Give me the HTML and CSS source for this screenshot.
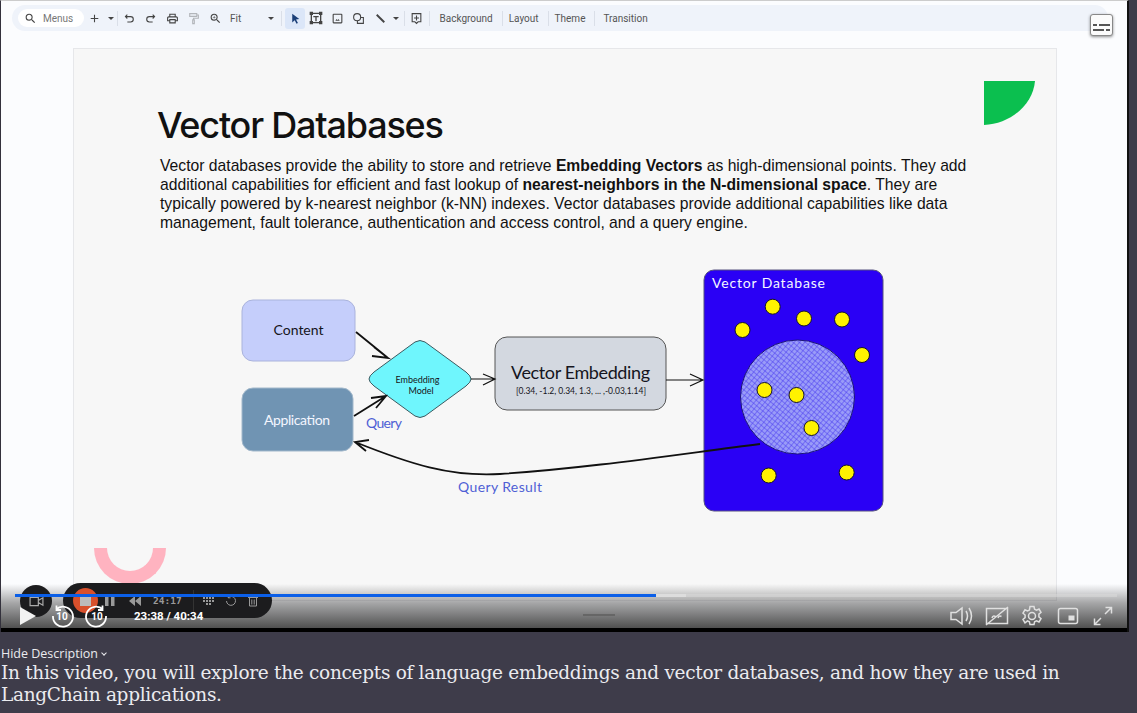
FILE: index.html
```html
<!DOCTYPE html>
<html>
<head>
    <title>Language embeddings and vector databases</title>
    <link rel="stylesheet" href="styles.css">
</head>
<body>
    <div class="video">
        <div class="toolbar">
            <div class="search">
                <svg class="icon" viewBox="0 0 24 24"><path d="M15.5 14h-.79l-.28-.27A6.47 6.47 0 0 0 16 9.5 6.5 6.5 0 1 0 9.5 16c1.61 0 3.09-.59 4.23-1.57l.27.28v.79l5 4.99L20.49 19l-4.99-5zm-6 0C7.01 14 5 11.99 5 9.5S7.01 5 9.5 5 14 7.01 14 9.5 11.99 14 9.5 14z"/></svg>
                <span>Menus</span>
            </div>
            <div class="tool"><svg class="icon" viewBox="0 0 24 24"><path d="M19 13h-6v6h-2v-6H5v-2h6V5h2v6h6v2z"/></svg></div>
            <div class="caret"></div>
            <div class="sep"></div>
            <div class="tool"><svg class="icon" viewBox="0 0 24 24"><path class="line" d="M8 5 4.5 8.5 8 12M5 8.5h9a5 5 0 0 1 0 10H8"/></svg></div>
            <div class="tool"><svg class="icon" viewBox="0 0 24 24"><path class="line" d="M16 5l3.500 3.500L16 12M19 8.500h-9a5 5 0 0 0 0 10h6"/></svg></div>
            <div class="tool"><svg class="icon" viewBox="0 0 24 24"><path d="M19 8h-1V3H6v5H5c-1.66 0-3 1.34-3 3v6h4v4h12v-4h4v-6c0-1.66-1.34-3-3-3zM8 5h8v3H8V5zm8 12v2H8v-4h8v2zm2-2v-2H6v2H4v-4c0-.55.45-1 1-1h14c.55 0 1 .45 1 1v4h-2z"/></svg></div>
            <div class="tool faded"><svg class="icon" viewBox="0 0 24 24"><path class="line" d="M5 3h13v5H5zM18 5.500h3v6h-9v3M10.500 14.500h3v7h-3z"/></svg></div>
            <div class="tool"><svg class="icon" viewBox="0 0 24 24"><path d="M15.500 14h-.79l-.28-.27A6.470 6.470 0 0 0 16 9.500 6.500 6.500 0 1 0 9.500 16c1.610 0 3.090-.59 4.230-1.570l.27.28v.79l5 4.990L20.490 19l-4.990-5zm-6 0C7.010 14 5 11.990 5 9.500S7.010 5 9.500 5 14 7.010 14 9.500 11.990 14 9.500 14zM12 10h-2v2H9v-2H7V9h2V7h1v2h2v1z"/></svg></div>
            <div class="fit">Fit</div>
            <div class="caret"></div>
            <div class="sep far"></div>
            <div class="tool active"><svg class="icon" viewBox="0 0 24 24"><path d="M6 3l13 10-6 .8 3.500 6.500-2.600 1.400-3.400-6.700L6 19.500z"/></svg></div>
            <div class="tool"><svg class="icon big" viewBox="0 0 24 24"><path class="line" d="M5 5h14v14H5z"/><path d="M2.500 2.500h5v5h-5zM16.500 2.500h5v5h-5zM2.500 16.500h5v5h-5zM16.500 16.500h5v5h-5zM8 9h8v2h-3v6h-2v-6H8z"/></svg></div>
            <div class="tool"><svg class="icon" viewBox="0 0 24 24"><path class="line" d="M5 4h14a1 1 0 0 1 1 1v14a1 1 0 0 1-1 1H5a1 1 0 0 1-1-1V5a1 1 0 0 1 1-1z"/><path d="M8 16l2.500-3 2 2 1.500-2 2 3z"/></svg></div>
            <div class="tool"><svg class="icon" viewBox="0 0 24 24"><circle class="line" cx="9.500" cy="9.500" r="6.500"/><path class="line" d="M16 10h5v11H10v-5"/></svg></div>
            <div class="tool"><svg class="icon" viewBox="0 0 24 24"><path class="thick" d="M5 5l14 14"/></svg></div>
            <div class="caret"></div>
            <div class="sep near"></div>
            <div class="tool"><svg class="icon" viewBox="0 0 24 24"><path class="line" d="M4 3h16v15h-5l-3 3-3-3H4z"/><path d="M11 6.500h2V10h3.500v2H13v3.500h-2V12H7.500v-2H11z"/></svg></div>
            <div class="sep"></div>
            <div class="menu-item first">Background</div>
            <div class="sep"></div>
            <div class="menu-item">Layout</div>
            <div class="sep"></div>
            <div class="menu-item">Theme</div>
            <div class="sep"></div>
            <div class="menu-item last">Transition</div>
        </div>

        <div class="slide">
            <h1>Vector Databases</h1>
            <div class="intro">
                <div>Vector databases provide the ability to store and retrieve <b>Embedding Vectors</b> as high-dimensional points. They add</div>
                <div>additional capabilities for efficient and fast lookup of <b>nearest-neighbors in the N-dimensional space</b>. They are</div>
                <div>typically powered by k-nearest neighbor (k-NN) indexes. Vector databases provide additional capabilities like data</div>
                <div>management, fault tolerance, authentication and access control, and a query engine.</div>
            </div>
            <svg class="diagram" viewBox="230 262 670 255" width="670" height="255">
                <defs>
                    <pattern id="hatch" width="4" height="4" patternUnits="userSpaceOnUse" patternTransform="rotate(40)">
                        <rect width="4" height="4" fill="#9a9cf8"/>
                        <path d="M0 0H4M0 0V4" stroke="#4a3cf0" stroke-width="1"/>
                    </pattern>
                </defs>

                <rect class="box-content" x="242" y="300" width="113" height="61" rx="11"/>
                <text class="hand" x="298.500" y="335" text-anchor="middle" textLength="50" font-size="14">Content</text>

                <rect class="box-app" x="242" y="388" width="111" height="63" rx="11"/>
                <text class="hand white" x="297" y="425" text-anchor="middle" textLength="66" font-size="14">Application</text>

                <path class="box-model" d="M369 379Q369 376 374 372L415 342Q420 339 425 342L466 372Q471 376 471 379Q471 382 466 386L425 416Q420 419 415 416L374 386Q369 382 369 379Z"/>
                <text class="hand" x="417.500" y="383" text-anchor="middle" textLength="44" font-size="9">Embedding</text>
                <text class="hand" x="421" y="394" text-anchor="middle" textLength="25" font-size="9">Model</text>

                <rect class="box-embed" x="495" y="337" width="171" height="73" rx="12"/>
                <text class="hand" x="580.500" y="379" text-anchor="middle" textLength="139" font-size="18">Vector Embedding</text>
                <text class="hand" x="581" y="394" text-anchor="middle" textLength="130" font-size="8.500">[0.34, -1.2, 0.34, 1.3, ... ,-0.03,1.14]</text>

                <rect class="box-db" x="704" y="270" width="179" height="241" rx="10"/>
                <text class="hand white" x="712" y="288" textLength="113" font-size="14">Vector Database</text>
                <circle class="cluster" cx="797.500" cy="397" r="57"/>
                <circle class="dot" cx="772.700" cy="306.700" r="7.500"/>
                <circle class="dot" cx="804" cy="318.500" r="7.500"/>
                <circle class="dot" cx="842" cy="319.500" r="7.500"/>
                <circle class="dot" cx="742.500" cy="330" r="7.500"/>
                <circle class="dot" cx="862" cy="355" r="7.500"/>
                <circle class="dot" cx="764.500" cy="390" r="7.500"/>
                <circle class="dot" cx="796.500" cy="395" r="7.500"/>
                <circle class="dot" cx="811.500" cy="428" r="7.500"/>
                <circle class="dot" cx="768.700" cy="475.500" r="7.500"/>
                <circle class="dot" cx="846.700" cy="472.500" r="7.500"/>

                <path class="arrow" d="M356 332L388 358M374 347L388 358L372 356"/>
                <path class="arrow" d="M354 416L386 396M371 398L386 396L376 408"/>
                <path class="arrow thin" d="M471 379H495M483 374L495 379L483 385"/>
                <path class="arrow thin" d="M666 380H703M690 374L703 380L690 386"/>
                <path class="arrow" d="M760 444C680 454 590 468 500 474C450 477 410 464 355 442M369 440L355 442L366 451"/>

                <text class="hand blue" x="366" y="428" textLength="36" font-size="14">Query</text>
                <text class="hand blue" x="458" y="492" textLength="84" font-size="14">Query Result</text>
            </svg>
            <svg class="leaf" viewBox="0 0 51 44" width="51" height="44"><path d="M0 0H51C49 24 26 43 0 44Z"/></svg>
            <div class="arc"></div>
        </div>

        <div class="player">
            <div class="controls-left">
                <svg class="play" viewBox="0 0 16 18" width="16" height="18"><path d="M0 0L16 9L0 18Z"/></svg>
                <svg class="seek first" viewBox="0 0 24 24" width="24" height="24"><path class="seek-ring" d="M6 5.500A10 10 0 1 1 3 12M6.500 1.500V6H11"/><text x="12" y="16" text-anchor="middle">10</text></svg>
                <svg class="seek" viewBox="0 0 24 24" width="24" height="24"><path class="seek-ring" d="M18 5.500A10 10 0 1 0 21 12M17.500 1.500V6H13"/><text x="12" y="16" text-anchor="middle">10</text></svg>
                <span class="time">23:38 / 40:34</span>
            </div>
            <div class="handle"></div>
            <div class="controls-right">
                <svg class="ctl" viewBox="0 0 24 24"><path d="M2 8.500h5L13 4v16l-6-4.500H2zM17 7q3 5 0 10M20 4q5 8 0 16"/></svg>
                <svg class="ctl" viewBox="0 0 24 24"><path d="M1.500 4.500h21v15h-21zM1 21L23 3M7 14q1-3 3.500-1.500M13 14q1-3 3.500-1.500"/></svg>
                <svg class="ctl" viewBox="0 0 24 24"><circle cx="12" cy="12" r="3.500"/><path d="M10 2.500h4l.6 2.800 1.900.9 2.500-1.200 2 3.400-2.100 1.800v2.600l2.100 1.800-2 3.400-2.500-1.200-1.900.9-.6 2.800h-4l-.6-2.800-1.900-.9L5 18.800l-2-3.400 2.100-1.800v-2.600L3 9.200l2-3.400 2.500 1.200 1.900-.9z"/></svg>
                <svg class="ctl" viewBox="0 0 24 24"><rect x="2.500" y="4.500" width="19" height="15" rx="2"/><rect class="solid" x="12.500" y="11.500" width="6" height="5"/></svg>
                <svg class="ctl" viewBox="0 0 24 24"><path d="M14.500 3.500H20.500V9.500M20.500 3.500L14 10M3.500 14.500V20.500H9.500M3.500 20.500L10 14"/></svg>
            </div>
        </div>

        <div class="progress">
            <div class="buffered"></div>
            <div class="played"></div>
        </div>

        <div class="rec-camera">
            <svg class="rec-icon" viewBox="0 0 16 12" width="15" height="11"><path d="M1 1.500h9v9H1zM10 5l5-3v8l-5-3"/></svg>
        </div>
        <div class="rec-pill">
            <div class="rec-stop"><div class="rec-square"></div></div>
            <svg class="rec-glyph rec-pause" viewBox="0 0 10 12" width="10" height="12"><path d="M0 1h3.500v10H0zM6 1h3.500v10H6z"/></svg>
            <svg class="rec-glyph rec-back" viewBox="0 0 12 10" width="12" height="10"><path d="M6 0v10L0 5zM12 0v10L6 5z"/></svg>
            <span class="rec-time">24:17</span>
            <div class="rec-sep"></div>
            <svg class="rec-glyph rec-grid" viewBox="0 0 12 10" width="12" height="10"><path d="M0 1h2v2H0zM3 1h2v2H3zM6 1h2v2H6zM9 1h2v2H9zM0 4h2v2H0zM3 4h2v2H3zM6 4h2v2H6zM9 4h2v2H9zM3 7h2v2H3zM6 7h2v2H6z"/></svg>
            <svg class="rec-stroke" viewBox="0 0 12 12" width="12" height="12"><path d="M3 2.500A4.500 4.500 0 1 1 1.500 6M3.200 .5v2.300h2.300"/></svg>
            <svg class="rec-stroke" viewBox="0 0 12 12" width="12" height="12"><path d="M1 2.500h10M2.500 2.500v8.500h7V2.500M4 1h4M4.800 4.500v5M7.200 4.500v5"/></svg>
        </div>

        <button class="captions">
            <span class="cc-line"><i class="short"></i><i class="long"></i></span>
            <span class="cc-line"><i class="long"></i><i class="short"></i></span>
        </button>
    </div>

    <div class="description">
        <div class="toggle">Hide Description <span class="chevron"></span></div>
        <p>In this video, you will explore the concepts of language embeddings and vector databases, and how they are used in<br>LangChain applications.</p>
    </div>
</body>
</html>
```

FILE: styles.css
```css
* {
    box-sizing: border-box;
}

body {
    margin: 0;
    height: 713px;
    overflow: hidden;
    background-color: #3e3c4a;
    font-family: 'Roboto', 'Liberation Sans', sans-serif;
}

.video {
    position: relative;
    width: 1129px;
    height: 632px;
    overflow: hidden;
    padding-top: 4px;
    background-color: #fbfcfe;
    border-top: 1px solid #ccc;
    border-left: 1px solid #33313c;
    border-right: 2px solid #111;
}

/* toolbar */
.toolbar {
    display: flex;
    align-items: center;
    height: 26px;
    margin: 0 19px 0 11px;
    padding-left: 6px;
    background-color: #eff3fa;
    border-radius: 13px;
    color: #555;
    font-size: 10px;
}

.search {
    display: flex;
    align-items: center;
    gap: 6px;
    flex: none;
    width: 66px;
    height: 18px;
    padding-left: 6px;
    background-color: #fff;
    border-radius: 9px;
    color: #777;
}

.icon {
    width: 13px;
    height: 13px;
    fill: #444;
}

.icon.big {
    width: 16px;
    height: 16px;
}

.icon .line {
    fill: none;
    stroke: #444;
    stroke-width: 2;
}

.icon .thick {
    fill: none;
    stroke: #444;
    stroke-width: 3.500;
}

.tool {
    display: flex;
    align-items: center;
    justify-content: center;
    flex: none;
    width: 21.500px;
    height: 21px;
}

.tool.faded {
    opacity: 0.35;
}

.tool.active {
    width: 20px;
    background-color: #dbe6f8;
    border-radius: 3px;
}

.tool.active .icon {
    fill: #1b3f78;
}

.caret {
    flex: none;
    width: 0;
    height: 0;
    margin: 0 2px;
    border-left: 3px solid transparent;
    border-right: 3px solid transparent;
    border-top: 3px solid #444;
}

.sep {
    flex: none;
    width: 1px;
    height: 15px;
    margin: 0 1px;
    background-color: #dadfe8;
}

.sep.far {
    margin: 0 3px 0 5px;
}

.sep.near {
    margin: 0 1px 0 3px;
}

.fit {
    flex: none;
    width: 36px;
    margin-left: 4px;
}

.menu-item {
    flex: none;
    padding: 0 8px 0 5px;
}

.menu-item.first {
    margin-left: 4px;
}

.menu-item.last {
    margin-left: 2px;
}

.captions {
    position: absolute;
    top: 13px;
    right: 14px;
    display: flex;
    flex-direction: column;
    gap: 3px;
    width: 23px;
    height: 22px;
    padding: 9px 2px 0;
    background-color: #fbfbfb;
    border: 1px solid #888;
    border-radius: 3px;
    box-shadow: 0 1px 3px rgba(0, 0, 0, 0.45);
}

.cc-line {
    display: flex;
    gap: 2px;
    width: 100%;
}

.cc-line i {
    height: 2px;
    background-color: #555;
}

.cc-line .short {
    flex: 1;
}

.cc-line .long {
    flex: 2.500;
}

/* slide */
.slide {
    position: relative;
    width: 984px;
    height: 553px;
    margin: 17px 0 0 72px;
    padding: 54px 0 0 83px;
    background-color: #f7f7f7;
    border: 1px solid #e6e7ea;
    color: #111;
}

h1 {
    margin: 0;
    font-family: 'Inter', 'Liberation Sans', sans-serif;
    font-size: 36px;
    font-weight: 500;
    line-height: 44px;
    letter-spacing: -1.200px;
}

.intro {
    margin: 9px 0 0 3px;
    font-family: 'Liberation Sans', Arial, sans-serif;
    font-size: 15.700px;
    line-height: 19px;
    white-space: nowrap;
}

.diagram {
    display: block;
    margin: 30px 0 0 73px;
}

.box-content {
    fill: #c5cefb;
    stroke: #aab3dc;
}

.box-app {
    fill: #7094b3;
    stroke: #a2b8cb;
}

.box-model {
    fill: #6ff6fd;
    stroke: #3c5a60;
}

.box-embed {
    fill: #d3d8e0;
    stroke: #555;
}

.box-db {
    fill: #2a00f5;
    stroke: #55517f;
}

.cluster {
    fill: url(#hatch);
    stroke: #1b1478;
}

.dot {
    fill: #fff200;
    stroke: #14122a;
}

.arrow {
    fill: none;
    stroke: #111;
    stroke-width: 1.800;
}

.arrow.thin {
    stroke-width: 1.200;
}

.hand {
    fill: #151520;
    font-family: 'Lato', 'Noto Sans', sans-serif;
}

.hand.white {
    fill: #f4f6ff;
}

.hand.blue {
    fill: #4f5fd5;
}

.leaf {
    position: absolute;
    top: 32px;
    right: 21px;
    fill: #0bbf4f;
}

.arc {
    position: absolute;
    top: 499px;
    left: 20px;
    width: 72px;
    height: 36px;
    border: 13px solid #ffb3c0;
    border-top: none;
    border-radius: 0 0 36px 36px;
}

/* video player */
.player {
    position: absolute;
    left: 0;
    right: 0;
    bottom: 0;
    display: flex;
    align-items: center;
    justify-content: space-between;
    height: 48px;
    padding: 16px 12px 0 19px;
    background: linear-gradient(to bottom, rgba(60, 60, 60, 0), rgba(60, 60, 60, 0.45) 40%, #505050 92%, #000 92%);
}

.controls-left {
    position: relative;
    display: flex;
    align-items: center;
    z-index: 2;
}

.play {
    fill: #f2f2f2;
    margin-right: 15px;
}

.seek {
    margin-right: 11px;
}

.seek.first {
    margin-left: -1px;
}

.seek-ring {
    fill: none;
    stroke: #fff;
    stroke-width: 1.800;
}

.seek text {
    fill: #fff;
    font-size: 10px;
    font-weight: 700;
}

.time {
    margin-left: 14px;
    color: #fff;
    font-size: 11.500px;
    font-weight: 700;
}

.handle {
    position: absolute;
    left: 582px;
    top: 30px;
    width: 32px;
    height: 2px;
    background-color: #666;
}

.controls-right {
    display: flex;
    gap: 11.500px;
}

.ctl {
    width: 24px;
    height: 24px;
    fill: none;
    stroke: #e0e0e0;
    stroke-width: 1.500;
}

.ctl .solid {
    fill: #e0e0e0;
    stroke: none;
}

.progress {
    position: absolute;
    left: 14px;
    top: 593px;
    width: 1102px;
    height: 3px;
    background-color: rgba(220, 220, 220, 0.5);
    z-index: 2;
}

.buffered {
    position: absolute;
    left: 0;
    top: 0;
    width: 671px;
    height: 3px;
    background-color: #ddd;
}

.played {
    position: absolute;
    left: 0;
    top: 0;
    width: 641px;
    height: 3px;
    background-color: #0b5fe8;
}

/* screen recorder widget, floats over the video */
.rec-camera {
    position: absolute;
    left: 19px;
    top: 584px;
    display: flex;
    align-items: center;
    justify-content: center;
    width: 32px;
    height: 32px;
    background-color: #1c1c1e;
    border-radius: 50%;
}

.rec-icon {
    fill: none;
    stroke: #aaa;
    stroke-width: 1.300;
}

.rec-pill {
    position: absolute;
    left: 62px;
    top: 582px;
    display: flex;
    align-items: center;
    width: 209px;
    height: 35px;
    padding-left: 10px;
    background-color: #1c1c1e;
    border-radius: 18px;
    z-index: 1;
}

.rec-stop {
    display: flex;
    align-items: center;
    justify-content: center;
    width: 25px;
    height: 25px;
    background-color: #d8502c;
    border-radius: 50%;
}

.rec-square {
    width: 11px;
    height: 11px;
    background-color: #bbb;
}

.rec-glyph {
    fill: #999;
}

.rec-pause {
    margin-left: 7px;
}

.rec-back {
    margin-left: 14px;
}

.rec-grid {
    margin-left: 9px;
}

.rec-stroke {
    margin-left: 10px;
    fill: none;
    stroke: #999;
    stroke-width: 1;
}

.rec-time {
    margin-left: 12px;
    color: #999;
    font-family: 'DejaVu Sans Mono', monospace;
    font-size: 9.500px;
    font-weight: 700;
}

.rec-sep {
    width: 1px;
    height: 22px;
    margin-left: 11px;
    background-color: #333;
}

/* description */
.description {
    padding: 13px 0 0 1px;
    color: #ebebef;
}

.toggle {
    display: flex;
    align-items: center;
    gap: 4px;
    font-family: 'Open Sans', sans-serif;
    font-size: 12.500px;
    line-height: 17px;
}

.chevron {
    width: 4px;
    height: 4px;
    margin-top: -2px;
    border-right: 1px solid #ebebef;
    border-bottom: 1px solid #ebebef;
    transform: rotate(45deg);
}

.description p {
    margin: 0;
    font-family: 'DejaVu Serif', 'Liberation Serif', serif;
    font-size: 18.500px;
    line-height: 22px;
    letter-spacing: -0.300px;
    white-space: nowrap;
}
```
